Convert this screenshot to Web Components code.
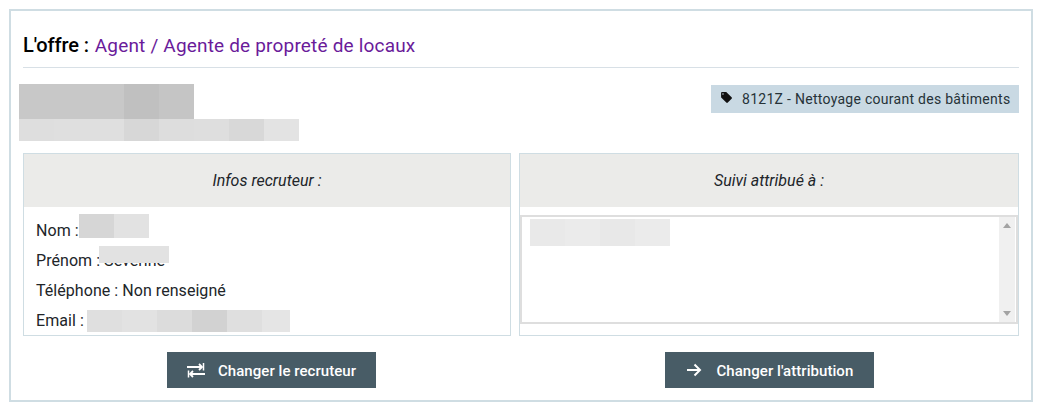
<!DOCTYPE html>
<html lang="fr">
<head>
<meta charset="utf-8">
<title>L'offre</title>
<style>
    html, body { margin: 0; background: #fff; }
    body { font-family: Roboto, "Liberation Sans", sans-serif; }
</style>
</head>
<body>
<offer-card>
    <offer-title slot="title" label="L'offre :">Agent / Agente de propreté de locaux</offer-title>
    <pixel-mask slot="company" flow cell-width="35" height="35" cells="c8c8c8,c8c8c8,c8c8c8,c0c0c0,c5c5c5"></pixel-mask>
    <pixel-mask slot="company" flow cell-width="35" height="22" cells="dedede,dfdfdf,dfdfdf,d7d7d7,dddddd,dedede,d8d8d8,e3e3e3"></pixel-mask>
    <naf-tag slot="tag">8121Z - Nettoyage courant des bâtiments</naf-tag>

    <info-panel slot="left" heading="Infos recruteur :">
        <info-lines>
            <div>Nom :</div>
            <div>Prénom : Séverine</div>
            <div>Téléphone : Non renseigné</div>
            <div>Email :</div>
            <pixel-mask style="left:55px;top:7px" cell-width="35" height="24" cells="d6d6d6,e2e2e2"></pixel-mask>
            <pixel-mask style="left:75px;top:39px" cell-width="35" height="17" cells="e2e2e2,e2e2e2"></pixel-mask>
            <pixel-mask style="left:63px;top:103px" cell-width="35" height="22" cells="dfdfdf,e2e2e2,dcdcdc,d2d2d2,dfdfdf,e5e5e5:28"></pixel-mask>
        </info-lines>
    </info-panel>

    <info-panel slot="right" heading="Suivi attribué à :">
        <scroll-box>
            <pixel-mask style="left:8px;top:2px" cell-width="35" height="27" cells="e9e9e9,ebebeb,e8e8e8,ebebeb"></pixel-mask>
        </scroll-box>
    </info-panel>

    <action-button slot="left-action" icon="swap">Changer le recruteur</action-button>
    <action-button slot="right-action" icon="arrow">Changer l'attribution</action-button>
</offer-card>

<script>
(function () {
    'use strict';

    const ICONS = {
        swap: `<svg width="18" height="18" viewBox="0 0 18 18" fill="none" stroke="#fff" stroke-width="1.8">
                <path d="M0 6h15M12 3l3 3-3 3"/>
                <path d="M16.500 2v7.500" stroke-width="1.500"/>
                <path d="M18 13H3M6 10l-3 3 3 3"/>
                <path d="M1.500 9.500V16.500" stroke-width="1.500"/>
            </svg>`,
        arrow: `<svg class="arrow" width="16" height="16" viewBox="0 0 16 16" fill="none" stroke="#fff" stroke-width="2">
                <path d="M1 8h13M8.500 2.500L14 8l-5.500 5.500"/>
            </svg>`
    };

    class OfferCard extends HTMLElement {
        constructor() {
            super();
            this.attachShadow({ mode: 'open' }).innerHTML = `
                <style>
                    :host {
                        display: block;
                        width: 1024px;
                        margin: 9px 0 0 9px;
                        box-sizing: border-box;
                        border: 2px solid #cfdde3;
                        padding: 20px 12px 12px;
                        color: #212529;
                        font-family: Roboto, "Liberation Sans", sans-serif;
                    }
                    .head-row {
                        display: flex;
                        justify-content: space-between;
                        align-items: flex-start;
                        margin: 16px 0 12px -4px;
                    }
                    .grid {
                        display: grid;
                        grid-template-columns: 488px 500px;
                        column-gap: 8px;
                    }
                    .panel { display: flex; }
                    .action {
                        display: flex;
                        justify-content: center;
                        margin-top: 16px;
                    }
                    .action.shifted { padding-left: 9px; }
                    .tag-wrap { padding-top: 1px; }
                </style>
                <slot name="title"></slot>
                <div class="head-row">
                    <div class="company"><slot name="company"></slot></div>
                    <div class="tag-wrap"><slot name="tag"></slot></div>
                </div>
                <div class="grid">
                    <div class="panel"><slot name="left"></slot></div>
                    <div class="panel"><slot name="right"></slot></div>
                    <div class="action shifted"><slot name="left-action"></slot></div>
                    <div class="action"><slot name="right-action"></slot></div>
                </div>
            `;
        }
    }

    class OfferTitle extends HTMLElement {
        connectedCallback() {
            this.attachShadow({ mode: 'open' }).innerHTML = `
                <style>
                    :host {
                        display: block;
                        height: 36px;
                        line-height: 29px;
                        border-bottom: 1px solid #d8e0e6;
                        font-size: 19px;
                        color: #6a1b9a;
                        letter-spacing: 0.18px;
                    }
                    b {
                        font-size: 20px;
                        font-weight: 500;
                        color: #000;
                        letter-spacing: -0.1px;
                    }
                    span { margin-left: 1px; }
                </style>
                <b>${this.getAttribute('label')}</b> <span><slot></slot></span>
            `;
        }
    }

    class PixelMask extends HTMLElement {
        connectedCallback() {
            const cellWidth = this.getAttribute('cell-width');
            const cells = this.getAttribute('cells').split(',').map((cell) => {
                const [colour, width] = cell.split(':');
                return `<i style="background:#${colour};width:${width || cellWidth}px"></i>`;
            }).join('');
            this.attachShadow({ mode: 'open' }).innerHTML = `
                <style>
                    :host {
                        display: flex;
                        position: absolute;
                        height: ${this.getAttribute('height')}px;
                    }
                    :host([flow]) { position: static; }
                    i { display: block; height: 100%; }
                </style>
                ${cells}
            `;
        }
    }

    class NafTag extends HTMLElement {
        constructor() {
            super();
            this.attachShadow({ mode: 'open' }).innerHTML = `
                <style>
                    :host {
                        display: flex;
                        align-items: center;
                        box-sizing: border-box;
                        width: 308px;
                        height: 28px;
                        padding-left: 9px;
                        gap: 9px;
                        background: #c9d9e3;
                        color: #263238;
                        font-size: 14px;
                        letter-spacing: 0.28px;
                        white-space: nowrap;
                    }
                    svg { display: block; margin-top: -3px; }
                </style>
                <svg width="13" height="13" viewBox="0 0 24 24" fill="#111">
                    <path d="M21.41 11.58l-9-9C12.05 2.22 11.55 2 11 2H4c-1.100 0-2 .9-2 2v7c0 .55.22 1.050.59 1.420l9 9c.36.36.86.58 1.410.58.55 0 1.050-.22 1.410-.59l7-7c.37-.36.59-.86.59-1.410 0-.55-.23-1.060-.59-1.420zM5.500 7C4.670 7 4 6.330 4 5.500S4.670 4 5.500 4 7 4.670 7 5.500 6.330 7 5.500 7z"/>
                </svg>
                <slot></slot>
            `;
        }
    }

    class InfoPanel extends HTMLElement {
        connectedCallback() {
            this.attachShadow({ mode: 'open' }).innerHTML = `
                <style>
                    :host {
                        display: block;
                        box-sizing: border-box;
                        width: 100%;
                        height: 183px;
                        border: 1px solid #cfdde3;
                    }
                    header {
                        height: 53px;
                        line-height: 54px;
                        background: #ebebe9;
                        text-align: center;
                        font-size: 16px;
                        font-style: italic;
                        color: #212529;
                    }
                </style>
                <header>${this.getAttribute('heading')}</header>
                <slot></slot>
            `;
        }
    }

    class InfoLines extends HTMLElement {
        constructor() {
            super();
            this.attachShadow({ mode: 'open' }).innerHTML = `
                <style>
                    :host {
                        display: block;
                        position: relative;
                        padding: 9px 12px 0;
                        height: 120px;
                        font-size: 16px;
                        line-height: 30px;
                        color: #212529;
                        letter-spacing: 0.05px;
                    }
                </style>
                <slot></slot>
            `;
        }
    }

    class ScrollBox extends HTMLElement {
        constructor() {
            super();
            this.attachShadow({ mode: 'open' }).innerHTML = `
                <style>
                    :host {
                        display: flex;
                        box-sizing: border-box;
                        height: 109px;
                        margin-top: 8px;
                        border: 2px solid #dedede;
                    }
                    .content { position: relative; flex: 1; background: #fff; }
                    .bar {
                        width: 16px;
                        margin-right: 1px;
                        background: #f0f0f0;
                        display: flex;
                        flex-direction: column;
                        justify-content: space-between;
                        align-items: center;
                        padding: 6px 0;
                    }
                    .up, .down {
                        width: 0;
                        height: 0;
                        border-left: 4px solid transparent;
                        border-right: 4px solid transparent;
                    }
                    .up { border-bottom: 5px solid #a3a3a3; }
                    .down { border-top: 5px solid #a3a3a3; }
                </style>
                <div class="content"><slot></slot></div>
                <div class="bar"><div class="up"></div><div class="down"></div></div>
            `;
        }
    }

    class ActionButton extends HTMLElement {
        connectedCallback() {
            this.attachShadow({ mode: 'open' }).innerHTML = `
                <style>
                    :host {
                        display: flex;
                        align-items: center;
                        box-sizing: border-box;
                        width: 209px;
                        height: 36px;
                        padding-left: 20px;
                        gap: 13px;
                        background: #485c66;
                        color: #fff;
                        font-size: 15px;
                        font-weight: 500;
                        letter-spacing: 0.05px;
                        white-space: nowrap;
                    }
                    svg { display: block; }
                    svg.arrow { margin: 0 2px 0 1px; }
                    span { padding-top: 2px; }
                </style>
                ${ICONS[this.getAttribute('icon')]}
                <span><slot></slot></span>
            `;
        }
    }

    customElements.define('offer-card', OfferCard);
    customElements.define('offer-title', OfferTitle);
    customElements.define('pixel-mask', PixelMask);
    customElements.define('naf-tag', NafTag);
    customElements.define('info-panel', InfoPanel);
    customElements.define('info-lines', InfoLines);
    customElements.define('scroll-box', ScrollBox);
    customElements.define('action-button', ActionButton);
})();
</script>
</body>
</html>
